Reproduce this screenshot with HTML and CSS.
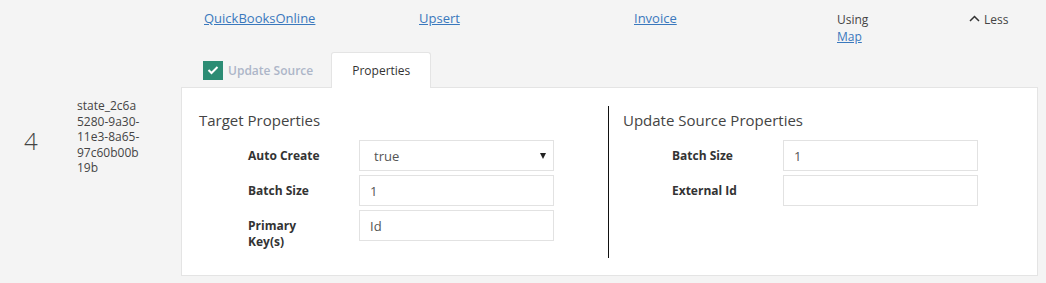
FILE: index.html
```html
<!DOCTYPE html>
<html lang="en">
<head>
    <meta charset="UTF-8">
    <title>Mapping Step</title>
    <link rel="stylesheet" href="styles.css">
</head>
<body>
    <div class="summary">
        <div class="col col-wide"><a href="#">QuickBooksOnline</a></div>
        <div class="col col-wide"><a href="#">Upsert</a></div>
        <div class="col col-mid"><a href="#">Invoice</a></div>
        <div class="col col-using">
            <span class="using">Using</span>
            <a href="#" class="small-link">Map</a>
        </div>
        <div class="col">
            <button class="less-button">
                <svg width="11" height="7" viewBox="0 0 11 7"><path d="M1 6 L5.5 1.5 L10 6" fill="none" stroke="#333" stroke-width="1.5"/></svg>
                Less
            </button>
        </div>
    </div>

    <div class="tabs">
        <div class="tab tab-check">
            <span class="checkbox">
                <svg width="12" height="10" viewBox="0 0 12 10"><path d="M1.5 5 L4.5 8 L10.5 2" fill="none" stroke="#fff" stroke-width="2"/></svg>
            </span>
            Update Source
        </div>
        <div class="tab tab-active">Properties</div>
    </div>

    <div class="step-row">
        <div class="step-info">
            <div class="step-number">4</div>
            <div class="step-id">state_2c6a5280-9a30-11e3-8a65-97c60b00b19b</div>
        </div>

        <div class="panel">
            <div class="panel-col target">
                <h3>Target Properties</h3>
                <div class="form-row">
                    <label>Auto Create</label>
                    <span class="select-wrap">
                        <select>
                            <option>true</option>
                            <option>false</option>
                        </select>
                    </span>
                </div>
                <div class="form-row">
                    <label>Batch Size</label>
                    <input type="text" value="1">
                </div>
                <div class="form-row">
                    <label>Primary Key(s)</label>
                    <input type="text" value="Id">
                </div>
            </div>
            <div class="panel-col divided">
                <h3>Update Source Properties</h3>
                <div class="form-row">
                    <label>Batch Size</label>
                    <input type="text" value="1">
                </div>
                <div class="form-row">
                    <label>External Id</label>
                    <input type="text" value="">
                </div>
            </div>
        </div>
    </div>
</body>
</html>
```

FILE: styles.css
```css
body {
    font-family: 'Open Sans', 'Liberation Sans', sans-serif;
    background-color: #f4f4f4;
    color: #333;
    margin: 0;
    padding: 0;
}

a {
    color: #3a78bd;
}

.summary {
    display: flex;
    padding: 9px 0 0 204px;
    height: 43px;
    font-size: 13px;
    line-height: 18px;
}

.col {
    flex: none;
}

.col-wide {
    width: 215px;
}

.col-mid {
    width: 203px;
}

.col-using {
    width: 131px;
    display: flex;
    flex-direction: column;
    font-size: 12px;
    line-height: 17px;
    padding-top: 2px;
}

.using {
    color: #444;
}

.less-button {
    background: none;
    border: none;
    padding: 2px 0 0 1px;
    font-family: inherit;
    font-size: 12px;
    line-height: 17px;
    color: #444;
    cursor: pointer;
    display: flex;
    align-items: center;
    gap: 4px;
}

.less-button svg {
    margin-top: -2px;
}

.tabs {
    display: flex;
    align-items: flex-end;
    margin-left: 181px;
    height: 35px;
}

.tab {
    height: 35px;
    box-sizing: border-box;
    display: flex;
    align-items: center;
    font-size: 12px;
}

.tab-check {
    padding: 2px 18px 0 22px;
    color: #adb6c8;
    font-weight: 600;
    gap: 5px;
}

.checkbox {
    width: 20px;
    height: 19px;
    background-color: #2c8c74;
    display: flex;
    align-items: center;
    justify-content: center;
    margin-top: -1px;
}

.tab-active {
    background-color: white;
    border: 1px solid #e4e4e4;
    border-bottom: none;
    border-radius: 3px 3px 0 0;
    padding: 0 20px;
    color: #333;
    height: 36px;
    margin-bottom: -1px;
    position: relative;
}

.step-row {
    display: flex;
}

.step-info {
    width: 181px;
    flex: none;
    display: flex;
    padding: 11px 0 0 24px;
    box-sizing: border-box;
}

.step-number {
    width: 53px;
    font-size: 24px;
    font-weight: 300;
    color: #444;
    padding-top: 26px;
}

.step-id {
    width: 63px;
    font-size: 12px;
    line-height: 15.5px;
    color: #444;
    overflow-wrap: break-word;
}

.panel {
    flex: 1;
    margin-right: 8px;
    background-color: white;
    border: 1px solid #e4e4e4;
    display: flex;
    padding: 18px 0 17px;
}

.panel-col {
    min-height: 152px;
    padding-left: 17px;
}

.panel-col.target {
    width: 426px;
    flex: none;
    box-sizing: border-box;
}

.panel-col.divided {
    flex: 1;
    border-left: 1px solid #111;
    padding-left: 14px;
}

.panel h3 {
    font-size: 15px;
    font-weight: 400;
    color: #444;
    line-height: 20px;
    margin: 4px 0 10px;
}

.form-row {
    display: flex;
    align-items: flex-start;
    margin-bottom: 4px;
}

.form-row label {
    width: 75px;
    margin-left: 49px;
    margin-right: 36px;
    padding-top: 8px;
    font-size: 12px;
    font-weight: 700;
    line-height: 16px;
    color: #333;
}

.form-row input,
.form-row select {
    width: 195px;
    height: 31px;
    box-sizing: border-box;
    border: 1px solid #e2e2e2;
    background-color: white;
    font-family: inherit;
    font-size: 13px;
    color: #555;
    padding: 0 10px;
    margin: 0;
    outline: none;
}

.select-wrap {
    position: relative;
    display: block;
}

.form-row select {
    appearance: none;
    -webkit-appearance: none;
    padding-left: 14px;
    display: block;
}

.select-wrap::after {
    content: "";
    position: absolute;
    right: 8px;
    top: 13px;
    border-left: 3.5px solid transparent;
    border-right: 3.5px solid transparent;
    border-top: 6px solid #222;
    pointer-events: none;
}
```
